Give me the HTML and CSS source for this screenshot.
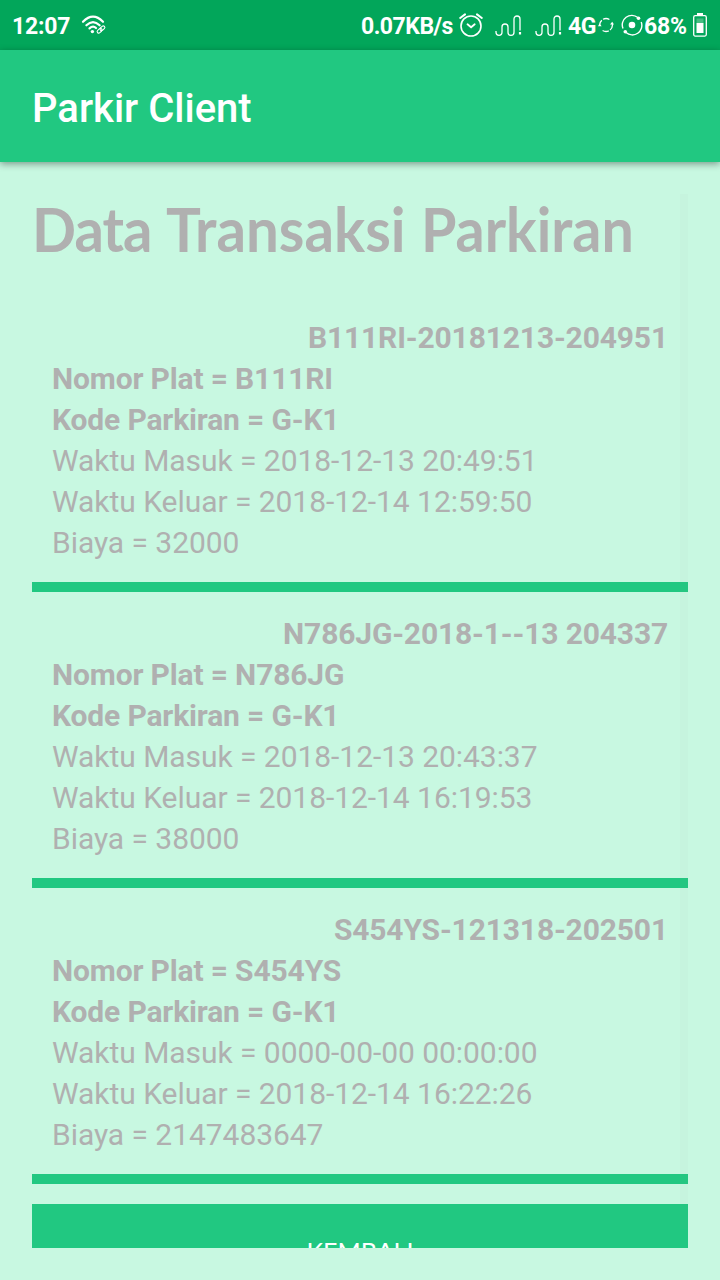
FILE: index.html
```html
<!DOCTYPE html>
<html lang="id">
<head>
<meta charset="utf-8">
<title>Parkir Client</title>
<link rel="stylesheet" href="styles.css">
</head>
<body>
<div class="status">
  <span class="clock">12:07</span>
  <svg class="wifi" width="26" height="22" viewBox="0 0 26 22" fill="none" stroke="#fff" stroke-linecap="round">
    <g stroke-width="2.2"><path d="M2 6.8Q12 -3.5 22 6.8"/><path d="M5.4 10.3Q12 3.8 18.6 10.3"/><path d="M8.5 13.4Q12 10.2 15 13"/></g>
    <circle cx="11.4" cy="16.6" r="1.7" fill="#fff" stroke="none"/>
    <g stroke-width="1.1" transform="rotate(-42 20 14.5)"><rect x="15.4" y="12.9" width="5.4" height="3.2" rx="1.6"/><rect x="19.2" y="12.9" width="5.4" height="3.2" rx="1.6"/></g>
  </svg>
  <span class="speed">0.07KB/s</span>
  <svg class="alarm" width="24" height="26" viewBox="0 0 24 26" fill="none" stroke="#fff" stroke-linecap="round">
    <circle cx="12" cy="14" r="10" stroke-width="1.6"/><path d="M1.2 6 6 2.4M18 2.4 22.8 6" stroke-width="2"/><path d="m8.5 12.3 3.6 3 3.6-3" stroke-width="1.8"/>
  </svg>
  <svg class="signal one" width="28" height="22" viewBox="0 0 28 22" fill="none" stroke="#fff" stroke-width="1.3">
    <path d="M1 16v1.3c0 4 6 4 6 0V12c0-4 6-4 6 0v5.2c0 4.2 6 4.2 6 0V4c0-4 6-4 6 0v11.5"/><path d="M25 17v2.5" stroke-width="2.2"/>
  </svg>
  <svg class="signal two" width="28" height="22" viewBox="0 0 28 22" fill="none" stroke="#fff" stroke-width="1.3">
    <path d="M1 16v1.3c0 4 6 4 6 0V12c0-4 6-4 6 0v5.2c0 4.2 6 4.2 6 0V4c0-4 6-4 6 0v11.5"/><path d="M25 17v2.5" stroke-width="2.2"/>
  </svg>
  <span class="network">4G</span>
  <svg class="sync" width="16" height="16" viewBox="0 0 16 16" fill="none" stroke="#fff" stroke-width="1.3">
    <path d="M1.8 9A6.4 6.4 0 0 1 3.8 3.2M5 2.3a6.4 6.4 0 0 1 6.4.2M14.2 6.5a6.4 6.4 0 0 1-2.2 6.5M10.8 13.8a6.4 6.4 0 0 1-6.2-.3"/><path d="M0 9.2 1.5 6.5l2.2 2.7zM12 7.4l2.2-2.6L16 7.4z" fill="#fff" stroke="none"/>
  </svg>
  <svg class="hotspot" width="22" height="22" viewBox="0 0 22 22" fill="none" stroke="#fff" stroke-width="1.4">
    <path d="M2 14.5A9.5 9.5 0 0 1 16.8 3.5M20.2 8A9.5 9.5 0 0 1 5 18.5"/><circle cx="11" cy="11" r="3.3" fill="#fff" stroke="none"/><circle cx="17.5" cy="4.3" r="1.8" fill="#fff" stroke="none"/><circle cx="4.3" cy="17.7" r="1.8" fill="#fff" stroke="none"/>
  </svg>
  <span class="percent">68%</span>
  <svg class="battery" width="14" height="24" viewBox="0 0 14 24">
    <path d="M4 0h6v3H4z" fill="#fff"/><rect x=".7" y="2.7" width="12.6" height="20.4" rx="1.5" fill="none" stroke="#fff" stroke-width="1.3"/><path d="M3.5 5.5h7V10h-7z" fill="#46bd82"/><path d="M3.5 10h7v10h-7z" fill="#fff"/>
  </svg>
</div>
<header class="appbar">Parkir Client</header>
<main class="content">
  <h1 class="heading"><span class="word data">Data</span><span class="word transaksi">Transaksi</span><span class="word parkiran">Parkiran</span></h1>
  <section class="item">
    <p class="code">B111RI-20181213-204951</p>
    <p class="strong">Nomor Plat = B111RI</p>
    <p class="strong">Kode Parkiran = G-K1</p>
    <p>Waktu Masuk = 2018-12-13 20:49:51</p>
    <p>Waktu Keluar = 2018-12-14 12:59:50</p>
    <p>Biaya = 32000</p>
  </section>
  <section class="item">
    <p class="code">N786JG-2018-1--13 204337</p>
    <p class="strong">Nomor Plat = N786JG</p>
    <p class="strong">Kode Parkiran = G-K1</p>
    <p>Waktu Masuk = 2018-12-13 20:43:37</p>
    <p>Waktu Keluar = 2018-12-14 16:19:53</p>
    <p>Biaya = 38000</p>
  </section>
  <section class="item">
    <p class="code">S454YS-121318-202501</p>
    <p class="strong">Nomor Plat = S454YS</p>
    <p class="strong">Kode Parkiran = G-K1</p>
    <p>Waktu Masuk = 0000-00-00 00:00:00</p>
    <p>Waktu Keluar = 2018-12-14 16:22:26</p>
    <p>Biaya = 2147483647</p>
  </section>
  <div class="button">KEMBALI</div>
  <i class="scrollbar"></i>
</main>
</body>
</html>
```
FILE: styles.css
```css
* { box-sizing: border-box; }
body {
  margin: 0;
  width: 720px;
  height: 1280px;
  overflow: hidden;
  background: #c8f8e1;
  font-family: Roboto, sans-serif;
}
p, h1 { margin: 0; }
.status {
  display: flex;
  align-items: flex-start;
  height: 50px;
  padding-left: 12px;
  background: #02a65a;
  color: #fff;
  font-size: 23px;
  font-weight: 700;
  line-height: 28px;
}
.status > * { flex: none; white-space: nowrap; }
.status span { margin-top: 13px; }
.clock { width: 69px; letter-spacing: -.2px; }
.wifi { margin-top: 15px; }
.speed { width: 98px; margin-left: 254px; letter-spacing: -.5px; }
.alarm { margin-top: 12px; }
.signal { margin-top: 15px; }
.one { margin-left: 12px; }
.two { margin-left: 12px; }
.network { width: 30px; margin-left: 5px; letter-spacing: -.5px; }
.sync { margin-top: 17px; }
.hotspot { margin: 14px 0 0 7px; }
.percent { width: 49px; margin-left: 1px; letter-spacing: -.2px; }
.battery { margin-top: 13px; }
.appbar {
  position: relative;
  height: 112px;
  padding-left: 32px;
  background: #21c881;
  box-shadow: 0 2px 7px rgba(0, 0, 0, .38);
  color: #fff;
  font-size: 40px;
  font-weight: 500;
  line-height: 118px;
}
.content {
  position: relative;
  height: 1086px;
  padding: 32px 32px 0;
  overflow: hidden;
  color: #b0b0b0;
}
.heading {
  display: flex;
  height: 102px;
  font: 700 61px/70px Lato, sans-serif;
}
.word { flex: none; white-space: nowrap; transform-origin: left; }
.data { width: 134px; letter-spacing: -1px; transform: scaleX(.95); }
.transaksi { width: 255px; transform: scaleX(.955); }
.parkiran { width: 220px; transform: scaleX(.94); }
.item {
  height: 296px;
  padding: 21px 20px 0;
  border-bottom: 10px solid #21c881;
  font-size: 30px;
  line-height: 41px;
  letter-spacing: -.05px;
  white-space: nowrap;
}
.strong, .code { font-weight: 700; letter-spacing: -.15px; }
.code { text-align: right; }
.button {
  height: 96px;
  margin-top: 20px;
  background: #21c881;
  color: #fff;
  font: 400 25px/94px Lato, sans-serif;
  text-align: center;
}
.scrollbar {
  position: absolute;
  top: 32px;
  left: 680px;
  width: 8px;
  height: 1035px;
  background: rgba(150, 150, 150, .04);
}
```
